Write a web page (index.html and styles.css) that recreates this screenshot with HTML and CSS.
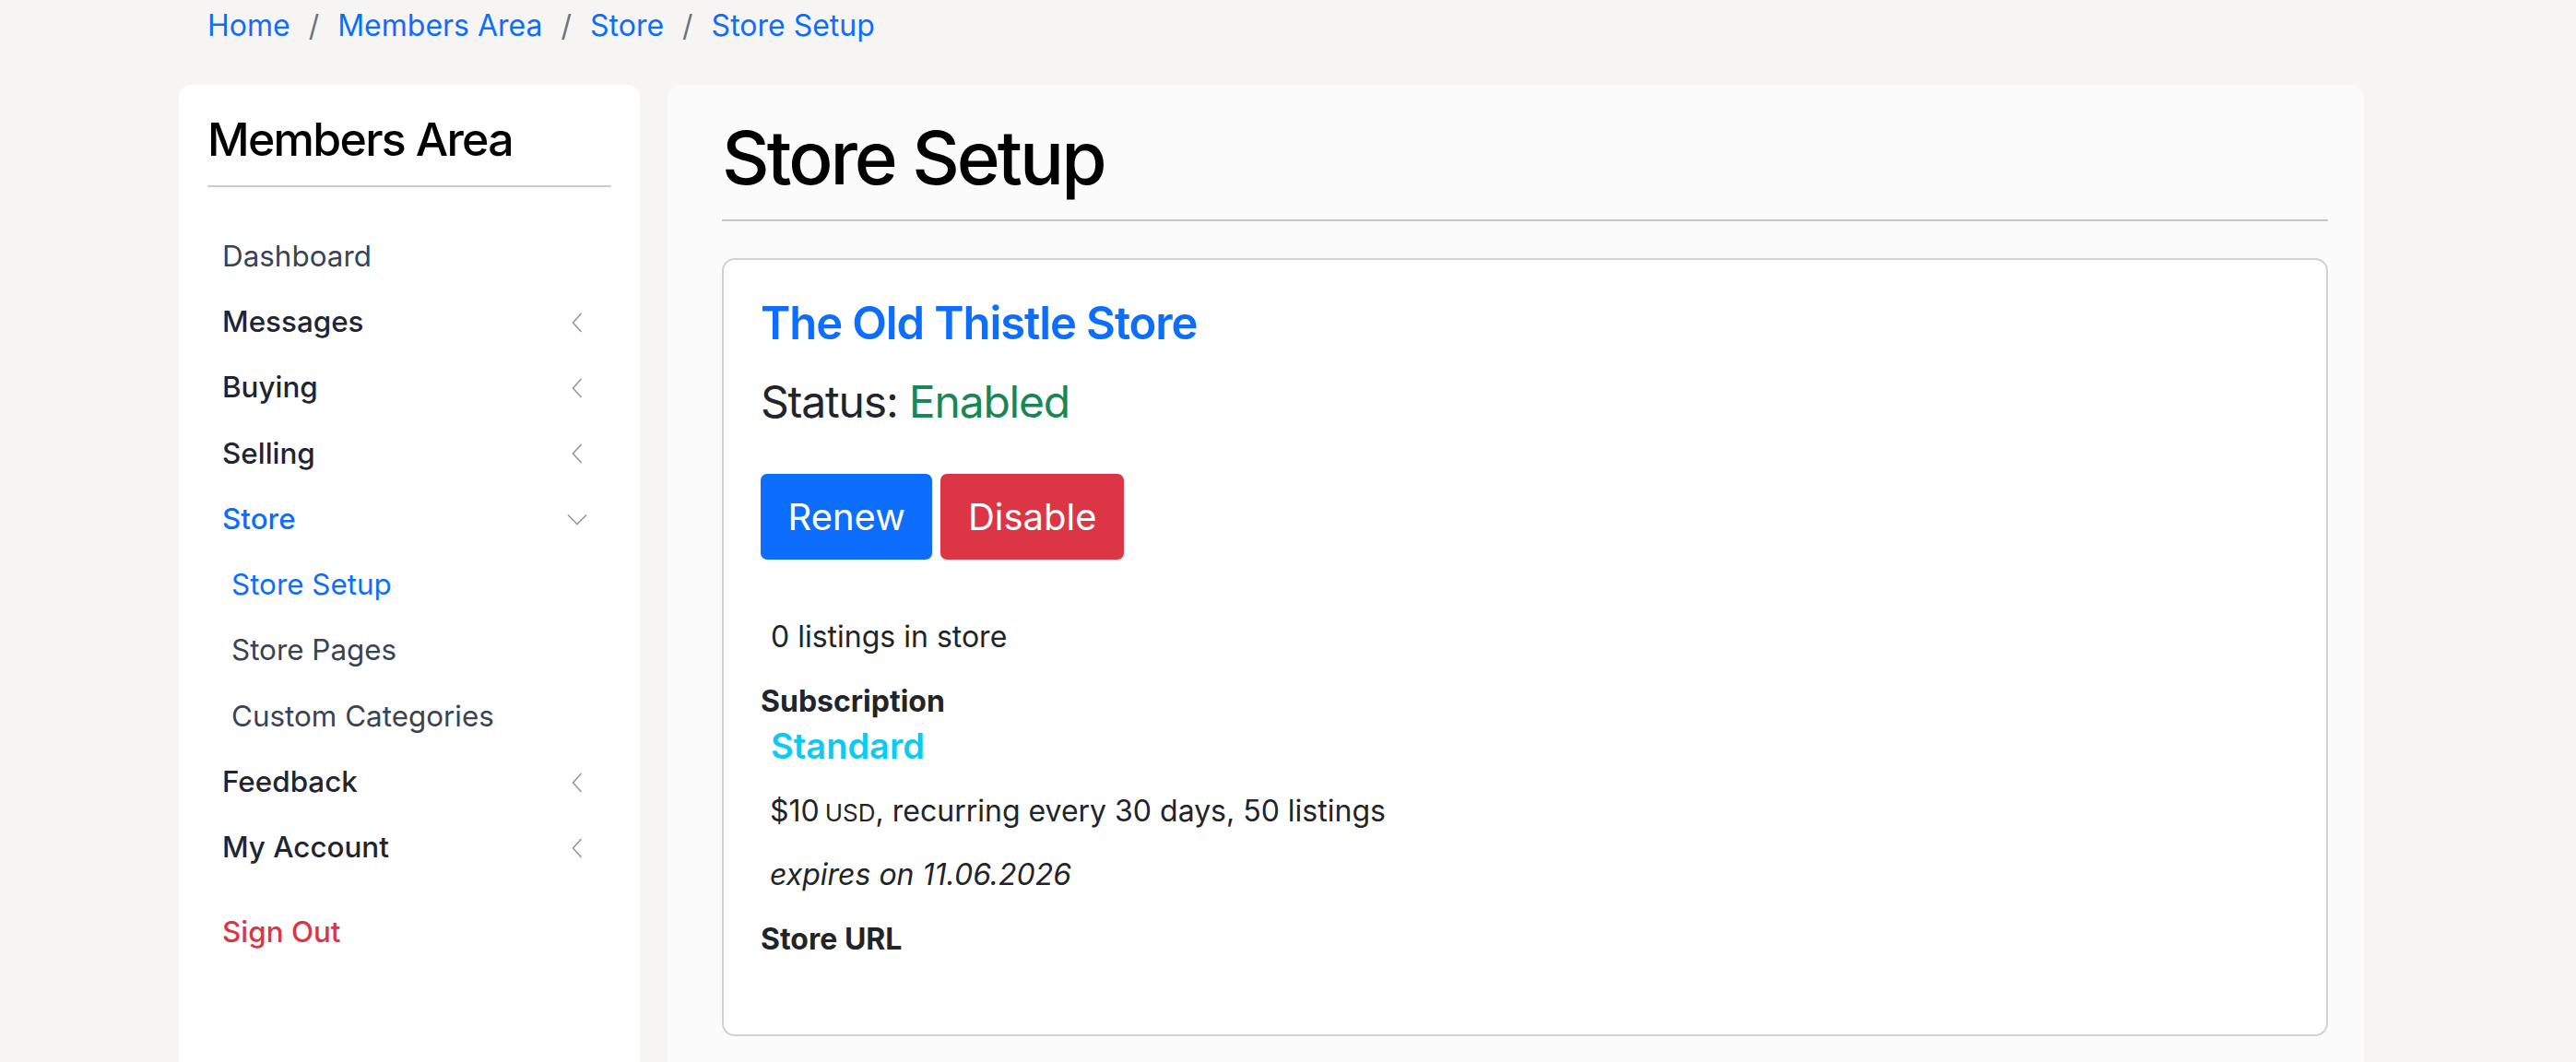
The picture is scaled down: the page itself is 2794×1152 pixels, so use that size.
FILE: index.html
```html
<!DOCTYPE html>
<html lang="en">
<head>
<meta charset="utf-8">
<title>Store Setup</title>
<link rel="stylesheet" href="styles.css">
</head>
<body>
<div class="page">
  <nav class="breadcrumb"><a class="crumb" href="#">Home</a><span class="sep">/</span><a class="crumb" href="#">Members Area</a><span class="sep">/</span><a class="crumb" href="#">Store</a><span class="sep">/</span><a class="crumb" href="#">Store Setup</a></nav>
  <div class="layout">
    <aside class="sidebar">
      <h4 class="side-title">Members Area</h4>
      <hr class="side-rule">
      <ul class="nav">
        <li class="nav-item plain">Dashboard</li>
        <li class="nav-item parent"><span>Messages</span><svg class="chev" width="12" height="22" viewBox="0 0 12 22"><polyline points="10.5,1 1.5,11 10.5,21"/></svg></li>
        <li class="nav-item parent"><span>Buying</span><svg class="chev" width="12" height="22" viewBox="0 0 12 22"><polyline points="10.5,1 1.5,11 10.5,21"/></svg></li>
        <li class="nav-item parent"><span>Selling</span><svg class="chev" width="12" height="22" viewBox="0 0 12 22"><polyline points="10.5,1 1.5,11 10.5,21"/></svg></li>
        <li class="nav-item parent active"><span>Store</span><svg class="chev down" width="22" height="13" viewBox="0 0 22 13"><polyline points="1,1.5 11,11.5 21,1.5"/></svg></li>
        <li class="nav-item sub current">Store Setup</li>
        <li class="nav-item sub">Store Pages</li>
        <li class="nav-item sub">Custom Categories</li>
        <li class="nav-item parent"><span>Feedback</span><svg class="chev" width="12" height="22" viewBox="0 0 12 22"><polyline points="10.5,1 1.5,11 10.5,21"/></svg></li>
        <li class="nav-item parent"><span>My Account</span><svg class="chev" width="12" height="22" viewBox="0 0 12 22"><polyline points="10.5,1 1.5,11 10.5,21"/></svg></li>
        <li class="nav-item signout">Sign Out</li>
      </ul>
    </aside>
    <main class="main">
      <h1 class="page-title">Store Setup</h1>
      <hr class="main-rule">
      <section class="store-card">
        <h3 class="store-name">The Old Thistle Store</h3>
        <h4 class="status">Status: <span class="enabled">Enabled</span></h4>
        <div class="actions">
          <button class="btn btn-primary">Renew</button>
          <button class="btn btn-danger">Disable</button>
        </div>
        <p class="listings">0 listings in store</p>
        <div class="label">Subscription</div>
        <div class="plan">Standard</div>
        <p class="price">$10<span class="cur">USD</span>, recurring every 30 days, 50 listings</p>
        <p class="expires">expires on 11.06.2026</p>
        <div class="label url">Store URL</div>
      </section>
    </main>
  </div>
</div>
</body>
</html>
```
FILE: styles.css
```css
* { box-sizing: border-box; }
html, body { margin: 0; padding: 0; }
body {
  background: #f6f5f3;
  font-family: Inter, "Noto Sans", sans-serif;
  color: #212529;
  font-size: 32px;
  line-height: 1.5;
  overflow: hidden;
  height: 1152px;
}
.page { padding-left: 194px; width: 2564px; }
.breadcrumb {
  padding: 4px 0 0 31px;
  height: 92px;
  font-size: 32px;
  line-height: 48px;
  white-space: nowrap;
}
.crumb { color: #0d6efd; text-decoration: none; }
.sep { color: #6c757d; padding: 0 20px; }
.layout { display: flex; gap: 30px; align-items: flex-start; }
.sidebar {
  width: 500px;
  height: 1200px;
  background: #ffffff;
  border-radius: 14px;
  padding: 31px 31px 0 31px;
}
.side-title {
  margin: 0;
  font-size: 50px;
  font-weight: 500;
  letter-spacing: -1.7px;
  line-height: 57.6px;
  color: #000;
}
.side-rule {
  margin: 20px 0 0 0;
  border: 0;
  border-top: 2px solid #cccccc;
}
.nav { list-style: none; margin: 40px 0 0 0; padding: 0; }
.nav-item {
  display: flex;
  align-items: center;
  justify-content: space-between;
  height: 71.3px;
  padding: 0 31px 0 16px;
  font-size: 31.4px;
  color: #1f2532;
  font-weight: 500;
}
.nav-item.plain, .nav-item.sub { font-weight: 400; color: #3a4354; }
.nav-item.sub { padding-left: 26px; }
.nav-item.active { color: #0d6efd; }
.nav-item.sub.current { color: #0d6efd; }
.nav-item.signout { color: #dc3545; margin-top: 20px; }
.chev { fill: none; stroke: #9299a6; stroke-width: 1.6; }
.chev.down { margin-right: -5px; }
.main {
  width: 1840px;
  height: 1200px;
  background: #fbfbfb;
  border-radius: 15px;
  padding: 32px 39px 0 59px;
}
.page-title {
  margin: 0;
  font-size: 80px;
  font-weight: 500;
  letter-spacing: -3px;
  line-height: 93.6px;
  color: #000;
}
.main-rule {
  margin: 20px 0 0 0;
  border: 0;
  border-top: 2px solid #c8c8c8;
}
.store-card {
  margin-top: 40px;
  background: #ffffff;
  border: 2px solid #d2d2d2;
  border-radius: 14px;
  padding: 40px 40px 79px 40px;
}
.store-name {
  margin: 0;
  font-size: 49px;
  font-weight: 600;
  letter-spacing: -1.1px;
  line-height: 58.8px;
  color: #0d6efd;
}
.status {
  margin: 27px 0 0 0;
  font-size: 48px;
  font-weight: 400;
  letter-spacing: -1.2px;
  line-height: 57.6px;
  color: #212529;
}
.enabled { color: #198754; }
.actions { display: flex; gap: 9px; margin-top: 49px; }
.btn {
  font-family: Inter, "Noto Sans", sans-serif;
  font-size: 40px;
  line-height: 93px;
  height: 93px;
  padding: 0 29.5px;
  border: 0;
  border-radius: 7px;
  color: #ffffff;
}
.btn-primary { background: #0d6efd; }
.btn-danger { background: #dc3545; }
.listings { margin: 60px 0 0 0; padding-left: 11px; }
.label { font-weight: 700; margin-top: 22px; }
.plan {
  padding-left: 11px;
  margin-top: 2px;
  font-size: 38px;
  font-weight: 600;
  line-height: 45.6px;
  color: #0dcaf0;
}
.price { margin: 23px 0 0 0; padding-left: 10px; }
.cur { font-size: 26px; padding-left: 6px; }
.expires { margin: 21px 0 0 0; padding-left: 10px; font-style: italic; }
.label.url { margin-top: 22px; }
```
